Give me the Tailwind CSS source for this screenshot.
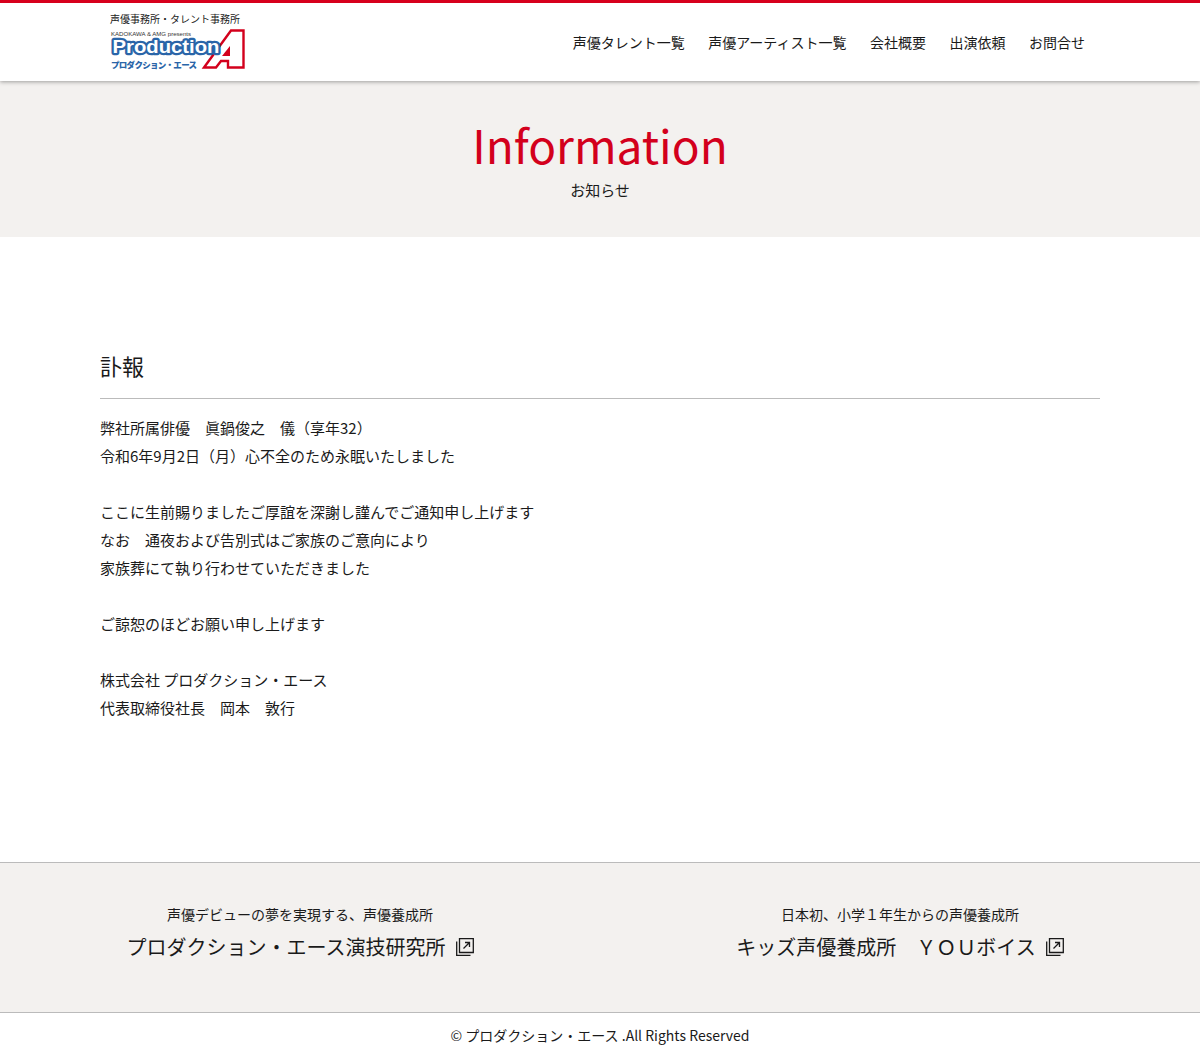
<!DOCTYPE html>
<html lang="ja">
<head>
    <meta charset="UTF-8">
    <meta name="viewport" content="width=device-width, initial-scale=1.0">
    <title>お知らせ | プロダクション・エース</title>
    <script src="https://cdn.jsdelivr.net/npm/@tailwindcss/browser@4"></script>
</head>
<body class="bg-white text-[#1a1a1a] font-['Noto_Sans_CJK_JP','Noto_Sans',sans-serif]">
    <!-- Header -->
    <header class="relative z-10 h-[81px] bg-white border-t-[3px] border-[#d7001d] shadow-[0_1px_4px_rgba(0,0,0,0.35)]">
        <div class="w-[1000px] mx-auto flex justify-between">
            <a href="#" class="block pl-[10px] pt-[8px]">
                <p class="text-[10px] leading-[15px]">声優事務所・タレント事務所</p>
                <svg width="136" height="44" viewBox="0 0 136 44" class="mt-[2px]">
                    <path d="M94 39.5 L121 2.5 H133.5 V39.5 H118 V33 H111 L106 39.5 Z" fill="#fff" stroke="#d3001c" stroke-width="2.4"/>
                    <path d="M112 28 L120 18 V28 Z" fill="#d3001c"/>
                    <text x="1" y="8" font-family="Liberation Sans" font-size="6.2" fill="#333" textLength="80" lengthAdjust="spacingAndGlyphs">KADOKAWA &amp; AMG presents</text>
                    <text x="2.5" y="24.5" font-family="Liberation Sans" font-size="19" font-weight="700" fill="#fff" stroke="#2a65a8" stroke-width="4.5" paint-order="stroke" stroke-linejoin="round" textLength="107" lengthAdjust="spacingAndGlyphs">Production</text>
                    <text x="1" y="40" font-family="Noto Sans CJK JP" font-size="8.5" font-weight="900" fill="#2a65a8" textLength="86">プロダクション・エース</text>
                </svg>
            </a>
            <nav class="flex gap-[23.5px] pt-[29px] pr-[15px] text-[14px] leading-[20px]">
                <a href="#">声優タレント一覧</a>
                <a href="#">声優アーティスト一覧</a>
                <a href="#">会社概要</a>
                <a href="#">出演依頼</a>
                <a href="#">お問合せ</a>
            </nav>
        </div>
    </header>

    <!-- Page title -->
    <section class="h-[156px] bg-[#f3f1ef] text-center pt-[33px]">
        <h1 class="text-[46px] leading-[60px] font-normal text-[#d3001c]">Information</h1>
        <p class="mt-[5px] text-[15px] leading-[22px]">お知らせ</p>
    </section>

    <!-- Article -->
    <main class="w-[1000px] mx-auto pt-[111px] h-[625px]">
        <h2 class="text-[22px] leading-[34px] pb-[16px] border-b border-[#bbb]">訃報</h2>
        <div class="pt-[15px] text-[15px] leading-[28px]">
            <p>弊社所属俳優　眞鍋俊之　儀（享年32）</p>
            <p>令和6年9月2日（月）心不全のため永眠いたしました</p>
            <p>&nbsp;</p>
            <p>ここに生前賜りましたご厚誼を深謝し謹んでご通知申し上げます</p>
            <p>なお　通夜および告別式はご家族のご意向により</p>
            <p>家族葬にて執り行わせていただきました</p>
            <p>&nbsp;</p>
            <p>ご諒恕のほどお願い申し上げます</p>
            <p>&nbsp;</p>
            <p>株式会社 プロダクション・エース</p>
            <p>代表取締役社長　岡本　敦行</p>
        </div>
    </main>

    <!-- School links -->
    <section class="h-[151px] bg-[#f3f1ef] border-y border-[#bbb] pt-[40px]">
        <div class="w-[1200px] grid grid-cols-2">
            <a href="#" class="block text-center">
                <p class="text-[14px] leading-[22px]">声優デビューの夢を実現する、声優養成所</p>
                <p class="mt-[6px] flex justify-center items-center gap-[10px] text-[20px] leading-[32px]">
                    プロダクション・エース演技研究所
                    <svg width="18" height="18" viewBox="0 0 18 18" fill="none" stroke="#1a1a1a" stroke-width="1.3"><path d="M3.5 0.7H17.3V14.5H3.5Z"/><path d="M0.7 3.5V17.3H14.5"/><path d="M7.5 10.5L13.5 4.5M9 4.5H13.5V9"/></svg>
                </p>
            </a>
            <a href="#" class="block text-center">
                <p class="text-[14px] leading-[22px]">日本初、小学１年生からの声優養成所</p>
                <p class="mt-[6px] flex justify-center items-center gap-[10px] text-[20px] leading-[32px]">
                    キッズ声優養成所　ＹＯＵボイス
                    <svg width="18" height="18" viewBox="0 0 18 18" fill="none" stroke="#1a1a1a" stroke-width="1.3"><path d="M3.5 0.7H17.3V14.5H3.5Z"/><path d="M0.7 3.5V17.3H14.5"/><path d="M7.5 10.5L13.5 4.5M9 4.5H13.5V9"/></svg>
                </p>
            </a>
        </div>
    </section>

    <footer class="h-[33px] text-center text-[14px] leading-[44px] overflow-hidden">© プロダクション・エース .All Rights Reserved</footer>
</body>
</html>
